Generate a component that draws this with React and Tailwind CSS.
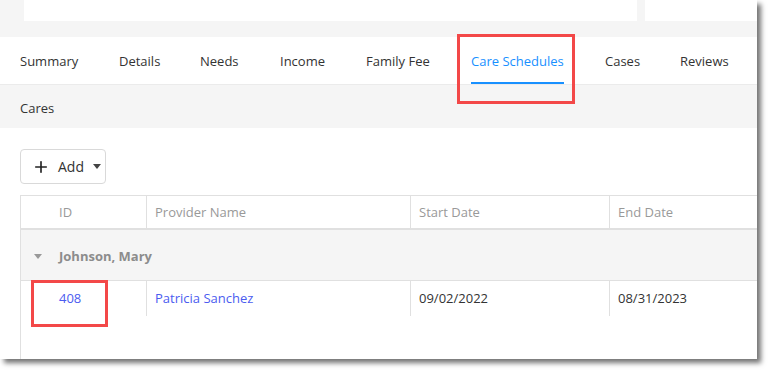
import { Plus } from "lucide-react";

const tabs = [
  { label: "Summary", w: "w-[58px]" },
  { label: "Details", w: "w-[40px]" },
  { label: "Needs", w: "w-[39px]" },
  { label: "Income", w: "w-[45px]" },
  { label: "Family Fee", w: "w-[64px]" },
  { label: "Care Schedules", w: "w-[93px]", active: true },
  { label: "Cases", w: "w-[34px]" },
  { label: "Reviews", w: "w-[48px]" },
];

function Caret({ className }) {
  return (
    <svg width="8" height="5" viewBox="0 0 8 5" className={className}>
      <path d="M0 0h8L4 5z" fill="currentColor" />
    </svg>
  );
}

export default function App() {
  return (
    <div className="w-[773px] h-[374px] bg-white font-['Segoe_UI','Open_Sans',sans-serif] text-[13px] text-[#333]">
      <div className="relative w-[757px] h-[359px] bg-white overflow-hidden shadow-[4px_4px_5px_rgba(0,0,0,0.55)]">
        {/* top cards strip */}
        <div className="h-[37px] bg-[#f5f5f5] flex gap-[8px] pl-[24px]">
          <div className="w-[613px] h-[21px] bg-white" />
          <div className="flex-1 h-[21px] bg-white" />
        </div>

        {/* tabs */}
        <div className="h-[48px] bg-white border-b border-[#ebebeb] flex pl-[20px] gap-[41px]">
          {tabs.map((t) => (
            <div key={t.label} className={`relative ${t.w} shrink-0 flex items-center pt-[3px] whitespace-nowrap`}>
              <span className={t.active ? "text-[#1890ff]" : "text-[#333]"}>{t.label}</span>
              {t.active && <div className="absolute left-0 right-0 bottom-0 h-[2px] bg-[#1890ff]" />}
            </div>
          ))}
        </div>

        {/* sub tab */}
        <div className="h-[43px] bg-[#f5f5f5] flex items-center pl-[20px] pt-[4px]">Cares</div>

        {/* toolbar */}
        <div className="pl-[20px] pt-[21px]">
          <button className="w-[86px] h-[35px] border border-[#d9d9d9] rounded-[4px] bg-white flex items-center pl-[11px]">
            <Plus size={18} strokeWidth={2.2} className="text-[#222]" />
            <span className="ml-[8px] text-[#333] text-[14px]">Add</span>
            <Caret className="ml-[9px] text-[#444]" />
          </button>
        </div>

        {/* table */}
        <div className="ml-[20px] mt-[11px] border-l border-t border-[#e0e0e0] h-[200px]">
          <div className="flex h-[34px] text-[#999] border-b-2 border-[#e0e0e0]">
            <div className="w-[30px] shrink-0" />
            <div className="w-[96px] shrink-0 flex items-center pl-[8px] pt-[2px] border-r border-[#e0e0e0]">ID</div>
            <div className="w-[264px] shrink-0 flex items-center pl-[8px] pt-[2px] border-r border-[#e0e0e0]">Provider Name</div>
            <div className="w-[199px] shrink-0 flex items-center pl-[8px] pt-[2px] border-r border-[#e0e0e0]">Start Date</div>
            <div className="flex-1 flex items-center pl-[8px] pt-[2px]">End Date</div>
          </div>
          <div className="flex h-[51px] bg-[#f5f5f5] border-b border-[#e0e0e0] items-center pt-[3px] text-[#8c8c8c] font-bold">
            <div className="w-[30px] shrink-0 flex justify-center pl-[4px]">
              <Caret className="text-[#999]" />
            </div>
            <div className="pl-[8px]">Johnson, Mary</div>
          </div>
          <div className="flex h-[35px]">
            <div className="w-[30px] shrink-0" />
            <div className="w-[96px] shrink-0 flex items-center pl-[8px] pt-[1px] border-r border-[#e0e0e0] text-[#4b5cf0]">408</div>
            <div className="w-[264px] shrink-0 flex items-center pl-[8px] pt-[1px] border-r border-[#e0e0e0] text-[#4b5cf0]">Patricia Sanchez</div>
            <div className="w-[199px] shrink-0 flex items-center pl-[8px] pt-[1px] border-r border-[#e0e0e0]">09/02/2022</div>
            <div className="flex-1 flex items-center pl-[8px] pt-[1px]">08/31/2023</div>
          </div>
        </div>

        {/* annotation boxes */}
        <div className="absolute left-[457px] top-[34px] w-[118px] h-[70px] border-[3px] border-[#f34848]" />
        <div className="absolute left-[31px] top-[280px] w-[77px] h-[47px] border-[3px] border-[#f34848]" />
      </div>
    </div>
  );
}
